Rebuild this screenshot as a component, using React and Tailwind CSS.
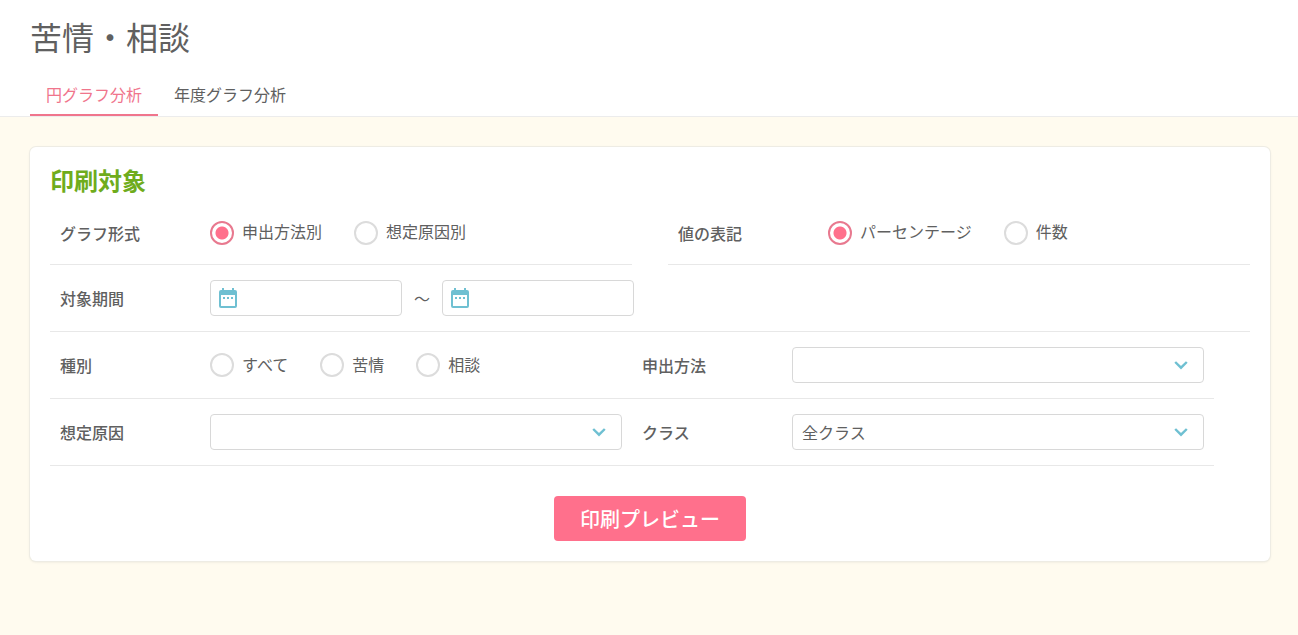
import { useState } from 'react';

const TABS = ['円グラフ分析', '年度グラフ分析'];

function Radio({ name, label, defaultChecked = false }) {
  return (
    <label className="flex cursor-pointer items-center gap-2">
      <input
        type="radio"
        name={name}
        defaultChecked={defaultChecked}
        className="size-6 shrink-0 appearance-none rounded-full border-2 border-[#dcdcdc] bg-white checked:border-[#e8798f] checked:bg-[radial-gradient(circle,#ff708c_0,#ff708c_6px,transparent_7px)]"
      />
      <span className="pb-[3px] leading-6">{label}</span>
    </label>
  );
}

function RadioField({ label, name, options, selected, className = '' }) {
  return (
    <fieldset className={`min-w-0 ${className}`}>
      <div className="flex items-center px-[10px]">
        <legend className="float-left w-[150px] shrink-0 font-medium">{label}</legend>
        <div className="flex gap-8">
          {options.map((option) => (
            <Radio key={option} name={name} label={option} defaultChecked={option === selected} />
          ))}
        </div>
      </div>
    </fieldset>
  );
}

function SelectField({ id, label, options }) {
  return (
    <div className="flex min-w-0 items-center px-[10px]">
      <label htmlFor={id} className="w-[150px] shrink-0 font-medium">
        {label}
      </label>
      <div className="grid min-w-0 flex-1 items-center">
        <select
          id={id}
          className="col-start-1 row-start-1 h-9 w-full appearance-none rounded-[4px] border border-[#d8d8d8] bg-white px-[9px] text-base"
        >
          {options.map((option) => (
            <option key={option}>{option}</option>
          ))}
        </select>
        <svg
          viewBox="0 0 14 10"
          className="pointer-events-none col-start-1 row-start-1 mr-4 h-[10px] w-[14px] justify-self-end"
          fill="none"
          stroke="#6fc0d2"
          strokeWidth="2.4"
          aria-hidden="true"
        >
          <path d="M1.2 2 7 7.7 12.8 2" />
        </svg>
      </div>
    </div>
  );
}

function DateInput({ label }) {
  return (
    <div className="flex h-9 w-48 items-center gap-2 rounded-[4px] border border-[#d8d8d8] bg-white px-2">
      <svg viewBox="0 0 18 20" className="h-5 w-[18px] shrink-0" aria-hidden="true">
        <path
          fill="#6fc0d2"
          fillRule="evenodd"
          d="M3 0h2v2h8V0h2v2h1a2 2 0 0 1 2 2v14a2 2 0 0 1-2 2H2a2 2 0 0 1-2-2V4a2 2 0 0 1 2-2h1zM2 7v11h14V7zM4 9h2v2H4zM8 9h2v2H8zM12 9h2v2h-2z"
        />
      </svg>
      <input type="text" aria-label={label} className="h-full min-w-0 flex-1 outline-none" />
    </div>
  );
}

export default function App() {
  const [active, setActive] = useState(TABS[0]);

  return (
    <div className="min-h-screen bg-[#fffbef] font-['Noto_Sans_CJK_JP',sans-serif] text-base text-[#606060]">
      <header className="border-b border-[#ececec] bg-white px-[30px] pt-3">
        <h1 className="text-[32px] leading-12">苦情・相談</h1>
        <nav className="mt-[14px] flex">
          {TABS.map((tab) => (
            <button
              key={tab}
              type="button"
              onClick={() => setActive(tab)}
              className={`h-[42px] border-b-2 px-4 ${
                active === tab ? 'border-[#f0758c] text-[#f0758c]' : 'border-transparent'
              }`}
            >
              {tab}
            </button>
          ))}
        </nav>
      </header>

      <main className="py-[30px] pr-7 pl-[30px]">
        <form
          onSubmit={(event) => event.preventDefault()}
          className="rounded-md bg-white px-5 pt-[15px] pb-5 shadow-[0_0_0_1px_#eeece4,0_1px_3px_rgba(0,0,0,0.1)]"
        >
          <h2 className="text-2xl leading-9 font-bold text-[#6fac1c]">印刷対象</h2>

          <div className="grid grid-cols-2 gap-9">
            <RadioField
              label="グラフ形式"
              name="graph"
              options={['申出方法別', '想定原因別']}
              selected="申出方法別"
              className="border-b border-[#e8e8e8] pt-[21px] pb-[18px]"
            />
            <RadioField
              label="値の表記"
              name="notation"
              options={['パーセンテージ', '件数']}
              selected="パーセンテージ"
              className="border-b border-[#e8e8e8] pt-[21px] pb-[18px]"
            />
          </div>

          <div className="flex items-center border-b border-[#e8e8e8] px-[10px] py-[15px]">
            <span className="w-[150px] shrink-0 font-medium">対象期間</span>
            <DateInput label="対象期間 開始日" />
            <span className="w-10 text-center">～</span>
            <DateInput label="対象期間 終了日" />
          </div>

          <div className="mr-9 grid grid-cols-2 items-center border-b border-[#e8e8e8] py-[15px]">
            <RadioField label="種別" name="type" options={['すべて', '苦情', '相談']} />
            <SelectField id="method" label="申出方法" options={['']} />
          </div>

          <div className="mr-9 grid grid-cols-2 items-center border-b border-[#e8e8e8] py-[15px]">
            <SelectField id="cause" label="想定原因" options={['']} />
            <SelectField id="class" label="クラス" options={['全クラス']} />
          </div>

          <div className="mt-[30px] flex justify-center">
            <button
              type="submit"
              className="h-[45px] w-48 rounded-[4px] bg-[#ff708c] text-xl font-medium text-white"
            >
              印刷プレビュー
            </button>
          </div>
        </form>
      </main>
    </div>
  );
}
